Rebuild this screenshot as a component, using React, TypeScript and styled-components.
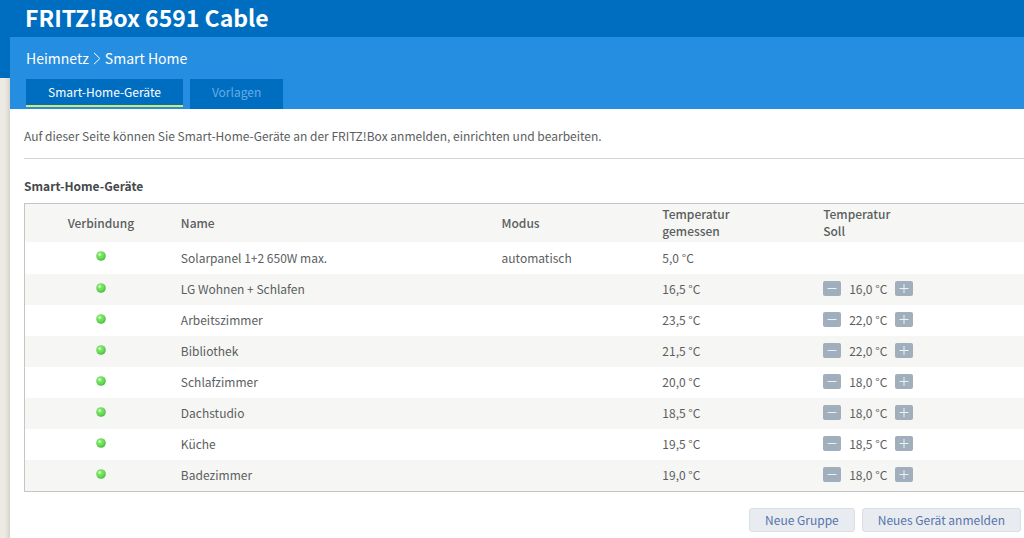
import React, { useState } from 'react';
import styled, { createGlobalStyle } from 'styled-components';

const GlobalStyle = createGlobalStyle`
  *, *::before, *::after { box-sizing: border-box; }
  body {
    margin: 0;
    background: #edeae3;
    color: #5b5e60;
    font-family: "Noto Sans CJK SC", "Open Sans", sans-serif;
    font-size: 12px;
    line-height: 17px;
    overflow-x: hidden;
  }
`;

const Page = styled.div`
  display: flex;
  flex-direction: column;
  min-height: 100vh;
`;

const Masthead = styled.header`
  height: 37px;
  padding: 2px 25px 0;
  background: #006ec0;
`;

const Product = styled.h1`
  margin: 0;
  color: #fff;
  font-size: 23px;
  font-weight: 700;
  line-height: 30px;
`;

const Body = styled.div`
  display: grid;
  grid-template-columns: 10px 1fr;
  flex: 1;
`;

const Gutter = styled.div`
  background: linear-gradient(#006ec0, #006ec0) 0 0 / 100% 41px no-repeat,
    linear-gradient(to right, #edeae3 50%, #d6d3cc);
`;

const Panel = styled.main`
  min-width: 0;
  background: #fff;
`;

const Banner = styled.div`
  display: flex;
  flex-direction: column;
  justify-content: space-between;
  height: 72px;
  padding: 10px 16px 0;
  background: #268ee0;
`;

const Breadcrumb = styled.nav`
  display: flex;
  align-items: center;
  gap: 4px;
  color: #fff;
  font-size: 14px;
  line-height: 22px;
`;

const Crumb = styled.a`
  color: inherit;
  text-decoration: none;
`;

const Tabs = styled.div`
  display: flex;
  align-items: flex-start;
  gap: 7px;
`;

const Tab = styled.button<{ $active?: boolean }>`
  height: ${p => (p.$active ? 28 : 30)}px;
  padding: 0 22px ${p => (p.$active ? 0 : 4)}px;
  border: 0;
  border-bottom: ${p => (p.$active ? '2px solid #d3ea62' : '0')};
  background: #006ec0;
  color: ${p => (p.$active ? '#fff' : '#66ade6')};
  font: inherit;
  line-height: 24px;
`;

const Content = styled.div`
  padding-left: 14px;
`;

const Intro = styled.p`
  margin: 0;
  padding: 17px 0 12px;
  border-bottom: 1px solid #d4d5d5;
  line-height: 20px;
`;

const Heading = styled.h2`
  margin: 17px 0 7px;
  color: #46494b;
  font-size: 12px;
  font-weight: 700;
  line-height: 20px;
`;

const DeviceTable = styled.table`
  width: 100%;
  border: 1px solid #c4c6c6;
  border-right: 0;
  border-spacing: 0;
  table-layout: fixed;
  font-size: 12px;
`;

const Row = styled.tr<{ $height: number }>`
  height: ${p => p.$height}px;
  &:nth-child(even) { background: #f6f6f4; }
  thead & { background: #f6f6f4; }
`;

const HeadCell = styled.th<{ $width: string; $center?: boolean }>`
  width: ${p => p.$width};
  padding: 0 4px 2px;
  font-weight: 500;
  text-align: ${p => (p.$center ? 'center' : 'left')};
`;

const Cell = styled.td<{ $center?: boolean }>`
  padding: 0 4px 2px;
  text-align: ${p => (p.$center ? 'center' : 'left')};
`;

const Lamp = styled.svg`
  display: block;
  margin: 0 auto 2px;
`;

const Stepper = styled.div`
  display: flex;
  align-items: center;
  gap: 8px;
`;

const StepButton = styled.button`
  display: grid;
  place-items: center;
  width: 18px;
  height: 15px;
  padding: 0;
  border: 0;
  border-radius: 2px;
  background: #a0afbb;
  color: #e8f2f9;
`;

const Target = styled.output`
  min-width: 38px;
  text-align: center;
`;

const Actions = styled.div`
  display: flex;
  justify-content: flex-end;
  gap: 7px;
  padding: 16px 3px 6px 0;
`;

const ActionButton = styled.button`
  height: 24px;
  padding: 0 15px;
  border: 1px solid #d9dee3;
  border-radius: 3px;
  background: #e8ecf0;
  color: #5674ac;
  font: inherit;
  line-height: 22px;
`;

type Device = { name: string; mode?: string; measured: string; target?: number };

const devices: Device[] = [
  { name: 'Solarpanel 1+2 650W max.', mode: 'automatisch', measured: '5,0' },
  { name: 'LG Wohnen + Schlafen', measured: '16,5', target: 16 },
  { name: 'Arbeitszimmer', measured: '23,5', target: 22 },
  { name: 'Bibliothek', measured: '21,5', target: 22 },
  { name: 'Schlafzimmer', measured: '20,0', target: 18 },
  { name: 'Dachstudio', measured: '18,5', target: 18 },
  { name: 'Küche', measured: '19,5', target: 18.5 },
  { name: 'Badezimmer', measured: '19,0', target: 18 },
];

function StatusLamp() {
  return (
    <Lamp width="10" height="10" viewBox="0 0 10 10" role="img" aria-label="verbunden">
      <defs>
        <radialGradient id="lamp" cx="0.4" cy="0.35" r="0.65">
          <stop offset="0" stopColor="#8ff076" />
          <stop offset="0.6" stopColor="#6bdc58" />
          <stop offset="1" stopColor="#4fb945" />
        </radialGradient>
      </defs>
      <circle cx="5" cy="5" r="4.8" fill="url(#lamp)" />
      <circle cx="3.7" cy="3.6" r="1.3" fill="#d4ffc8" />
    </Lamp>
  );
}

function StepIcon({ plus }: { plus?: boolean }) {
  return (
    <svg width="10" height="9" viewBox="0 0 10 9" stroke="currentColor" aria-hidden="true">
      <path d={plus ? 'M0.5 4.5H9.5M5 0V9' : 'M0.5 4.5H9.5'} />
    </svg>
  );
}

function TargetControl({ name, initial }: { name: string; initial: number }) {
  const [value, setValue] = useState(initial);
  return (
    <Stepper>
      <StepButton type="button" aria-label={`${name} kälter`} onClick={() => setValue(value - 0.5)}>
        <StepIcon />
      </StepButton>
      <Target>{value.toFixed(1).replace('.', ',')} °C</Target>
      <StepButton type="button" aria-label={`${name} wärmer`} onClick={() => setValue(value + 0.5)}>
        <StepIcon plus />
      </StepButton>
    </Stepper>
  );
}

export default function App() {
  return (
    <Page>
      <GlobalStyle />
      <Masthead>
        <Product>FRITZ!Box 6591 Cable</Product>
      </Masthead>
      <Body>
        <Gutter />
        <Panel>
          <Banner>
            <Breadcrumb aria-label="Pfad">
              <Crumb href="#heimnetz">Heimnetz</Crumb>
              <svg width="8" height="13" viewBox="0 0 8 13" fill="none" stroke="currentColor" aria-hidden="true">
                <path d="M1 0.8L6.8 6.5L1 12.2" />
              </svg>
              <Crumb href="#smarthome">Smart Home</Crumb>
            </Breadcrumb>
            <Tabs>
              <Tab type="button" $active>Smart-Home-Geräte</Tab>
              <Tab type="button">Vorlagen</Tab>
            </Tabs>
          </Banner>
          <Content>
            <Intro>Auf dieser Seite können Sie Smart-Home-Geräte an der FRITZ!Box anmelden, einrichten und bearbeiten.</Intro>
            <Heading>Smart-Home-Geräte</Heading>
            <DeviceTable>
              <thead>
                <Row $height={38}>
                  <HeadCell $width="15.2%" $center>Verbindung</HeadCell>
                  <HeadCell $width="32.1%">Name</HeadCell>
                  <HeadCell $width="16.1%">Modus</HeadCell>
                  <HeadCell $width="16.1%">Temperatur<br />gemessen</HeadCell>
                  <HeadCell $width="20.5%">Temperatur<br />Soll</HeadCell>
                </Row>
              </thead>
              <tbody>
                {devices.map(d => (
                  <Row key={d.name} $height={d.mode ? 32 : 31}>
                    <Cell $center><StatusLamp /></Cell>
                    <Cell>{d.name}</Cell>
                    <Cell>{d.mode}</Cell>
                    <Cell>{d.measured} °C</Cell>
                    <Cell>{d.target !== undefined && <TargetControl name={d.name} initial={d.target} />}</Cell>
                  </Row>
                ))}
              </tbody>
            </DeviceTable>
            <Actions>
              <ActionButton type="button">Neue Gruppe</ActionButton>
              <ActionButton type="button">Neues Gerät anmelden</ActionButton>
            </Actions>
          </Content>
        </Panel>
      </Body>
    </Page>
  );
}
